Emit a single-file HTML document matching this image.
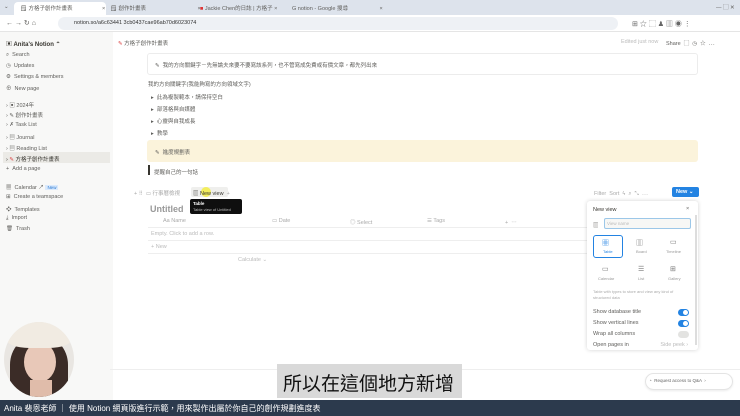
<!DOCTYPE html>
<html><head><meta charset="utf-8"><style>
*{margin:0;padding:0;box-sizing:border-box}
body{width:740px;height:416px;overflow:hidden;background:#fff;font-family:"Liberation Sans","Noto Sans CJK TC",sans-serif;position:relative;color:#37352f}
.a{position:absolute;white-space:nowrap}
.s{font-size:5.5px;color:#5f5e5b}
.m{font-size:6px;color:#37352f}
.g{color:#aaa}
</style></head><body>
<!-- tab bar -->
<div class="a" style="left:0;top:0;width:740px;height:15px;background:#dde3ec"></div>
<div class="a" style="left:14px;top:2px;width:92px;height:13px;background:#fff;border-radius:4px 4px 0 0"></div>
<div class="a s" style="left:20px;top:4px">🗒 方格子創作計畫表 <span style="margin-left:28px">×</span></div>
<div class="a s" style="left:110px;top:4px">🗒 創作計畫表 <span style="margin-left:50px">×</span></div>
<div class="a s" style="left:200px;top:4px"><span style="color:#d33">■</span> Jackie Chen的日誌 | 方格子 ×</div>
<div class="a s" style="left:292px;top:4px">G notion - Google 搜尋 <span style="margin-left:30px">×</span></div>
<div class="a s" style="left:4px;top:4px">⌄</div>
<div class="a s" style="left:716px;top:3px">— ▢ ✕</div>
<!-- address bar -->
<div class="a" style="left:0;top:15px;width:740px;height:17px;background:#fff;border-bottom:1px solid #e5e5e5"></div>
<div class="a s" style="left:6px;top:19px;font-size:7px">←  →  ↻  ⌂</div>
<div class="a" style="left:58px;top:17px;width:560px;height:13px;background:#eef1f5;border-radius:7px"></div>
<div class="a s" style="left:74px;top:20px;color:#333">notion.so/a6c63441 3cb0437cae96ab70d6023074</div>
<div class="a s" style="left:632px;top:19px;font-size:7px;color:#666">⊞ ☆ ⬚ ♟ ▥ ◉ ⋮</div>
<!-- sidebar -->
<div class="a" style="left:0;top:32px;width:113px;height:368px;background:#f8f8f7"></div>
<div class="a m" style="left:6px;top:39px;font-weight:bold">▣ Anita's Notion ⌃</div>
<div class="a s" style="left:6px;top:52px">⌕ &nbsp;Search</div>
<div class="a s" style="left:6px;top:63px">◷ &nbsp;Updates</div>
<div class="a s" style="left:6px;top:74px">⚙ &nbsp;Settings &amp; members</div>
<div class="a s" style="left:6px;top:84px">⊕ &nbsp;New page</div>
<div class="a s" style="left:6px;top:101px">› ▣ 2024年</div>
<div class="a s" style="left:6px;top:111px">› ✎ 創作計畫表</div>
<div class="a s" style="left:6px;top:122px">› ✗ Task List</div>
<div class="a s" style="left:6px;top:133px">› ▤ Journal</div>
<div class="a s" style="left:6px;top:144px">› ▤ Reading List</div>
<div class="a" style="left:3px;top:152px;width:107px;height:11px;background:#ebeae6"></div>
<div class="a s" style="left:6px;top:155px;color:#37352f">› <span style="color:#d44">✎</span> 方格子創作計畫表</div>
<div class="a s" style="left:6px;top:166px">+ &nbsp;Add a page</div>
<div class="a s" style="left:6px;top:183px">▦ &nbsp;Calendar ↗ <span style="background:#dbeafc;color:#2a7ad3;padding:0 2px;font-size:4.5px">New</span></div>
<div class="a s" style="left:6px;top:194px">⊞ &nbsp;Create a teamspace</div>
<div class="a s" style="left:6px;top:205px">❖ &nbsp;Templates</div>
<div class="a s" style="left:6px;top:215px">⤓ &nbsp;Import</div>
<div class="a s" style="left:6px;top:226px">🗑 &nbsp;Trash</div>
<!-- top bar -->
<div class="a s" style="left:118px;top:39px"><span style="color:#d44">✎</span> 方格子創作計畫表</div>
<div class="a s g" style="left:621px;top:39px;color:#bbb">Edited just now</div>
<div class="a s" style="left:666px;top:39px">Share &nbsp;▢ &nbsp;◷ &nbsp;☆ &nbsp;⋯</div>
<!-- callout -->
<div class="a" style="left:147px;top:53px;width:551px;height:22px;border:1px solid #ececec;border-radius:3px"></div>
<div class="a s" style="left:155px;top:61px">✎ &nbsp;我的方向關鍵字－先無論夫來要不要寫該系列，也不管寫成免費或有價文章，都先列出來</div>
<div class="a s" style="left:148px;top:80px">我的方向關鍵字(我能夠寫的方向領域文字)</div>
<div class="a s" style="left:151px;top:93px">▸ &nbsp;此為複製範本，請保持空白</div>
<div class="a s" style="left:151px;top:105px">▸ &nbsp;部落格與自媒體</div>
<div class="a s" style="left:151px;top:117px">▸ &nbsp;心靈與自我成長</div>
<div class="a s" style="left:151px;top:129px">▸ &nbsp;教學</div>
<div class="a" style="left:147px;top:140px;width:551px;height:22px;background:#fbf3db;border-radius:3px"></div>
<div class="a s" style="left:155px;top:148px">✎ &nbsp;進度規劃表</div>
<div class="a" style="left:148px;top:165px;width:1.5px;height:10px;background:#37352f"></div>
<div class="a s" style="left:154px;top:168px">提醒自己的一句話</div>
<!-- db -->
<div class="a s g" style="left:134px;top:189px">+ ⠿ &nbsp;▭ 行事曆檢視</div>
<div class="a" style="left:191px;top:187px;width:37px;height:10px;background:#efefed;border-radius:2px"></div>
<div class="a" style="left:201px;top:187px;width:10px;height:10px;background:#f4ee3a;border-radius:50%;opacity:.8"></div>
<div class="a s" style="left:193px;top:189px;color:#37352f">▥ New view &nbsp;<span class="g">+</span></div>
<div class="a" style="left:190px;top:199px;width:52px;height:15px;background:#0f0f0f;border-radius:2px"></div>
<div class="a" style="left:193px;top:201px;font-size:4.5px;color:#fff;font-weight:bold">Table</div>
<div class="a" style="left:193px;top:207px;font-size:4px;color:#bbb">Table view of Untitled</div>
<div class="a" style="left:150px;top:204px;font-size:9px;font-weight:bold;color:#999">Untitled</div>
<div class="a s g" style="left:163px;top:218px">Aa Name</div>
<div class="a s g" style="left:272px;top:218px">▭ Date</div>
<div class="a s g" style="left:350px;top:218px">◎ Select</div>
<div class="a s g" style="left:427px;top:218px">☰ Tags</div>
<div class="a s g" style="left:505px;top:218px">+ &nbsp;⋯</div>
<div class="a" style="left:148px;top:227px;width:440px;height:1px;background:#eee"></div>
<div class="a s g" style="left:151px;top:231px;color:#bbb">Empty. Click to add a row.</div>
<div class="a" style="left:148px;top:240px;width:440px;height:1px;background:#eee"></div>
<div class="a s g" style="left:151px;top:244px;color:#bbb">+ New</div>
<div class="a" style="left:148px;top:253px;width:440px;height:1px;background:#eee"></div>
<div class="a s g" style="left:238px;top:257px;color:#bbb">Calculate ⌄</div>
<div class="a s g" style="left:594px;top:189px">Filter &nbsp;Sort &nbsp;ϟ &nbsp;⌕ &nbsp;⤡ &nbsp;⋯</div>
<div class="a" style="left:672px;top:187px;width:27px;height:10px;background:#2383e2;border-radius:2px;color:#fff;font-size:5.5px;font-weight:bold;padding:2px 0 0 4px">New ⌄</div>
<!-- popup -->
<div class="a" style="left:587px;top:201px;width:111px;height:149px;background:#fff;box-shadow:0 0 4px rgba(0,0,0,.18);border-radius:3px"></div>
<div class="a s" style="left:593px;top:207px;color:#37352f">New view</div>
<div class="a s" style="left:686px;top:206px">×</div>
<div class="a s" style="left:593px;top:221px">▥</div>
<div class="a" style="left:604px;top:218px;width:87px;height:11px;border:1px solid #9cc7e8;border-radius:2px;background:#f7f7f5"></div>
<div class="a" style="left:607px;top:221px;font-size:4.5px;color:#bbb">View name</div>
<div class="a" style="left:593px;top:235px;width:30px;height:23px;border:1.5px solid #2383e2;border-radius:3px"></div>
<div class="a" style="left:602px;top:238px;font-size:7px;color:#2383e2">▦</div>
<div class="a" style="left:603px;top:249px;font-size:4px;color:#2383e2">Table</div>
<div class="a" style="left:636px;top:238px;font-size:7px;color:#777">▥</div>
<div class="a" style="left:636px;top:249px;font-size:4px;color:#999">Board</div>
<div class="a" style="left:670px;top:238px;font-size:7px;color:#777">▭</div>
<div class="a" style="left:666px;top:249px;font-size:4px;color:#999">Timeline</div>
<div class="a" style="left:602px;top:265px;font-size:7px;color:#777">▭</div>
<div class="a" style="left:598px;top:276px;font-size:4px;color:#999">Calendar</div>
<div class="a" style="left:638px;top:265px;font-size:7px;color:#777">☰</div>
<div class="a" style="left:638px;top:276px;font-size:4px;color:#999">List</div>
<div class="a" style="left:670px;top:265px;font-size:7px;color:#777">⊞</div>
<div class="a" style="left:668px;top:276px;font-size:4px;color:#999">Gallery</div>
<div class="a" style="left:593px;top:289px;font-size:4px;color:#aaa;white-space:normal;width:95px;line-height:6px">Table with types to store and view any kind of structured data</div>
<div class="a s" style="left:593px;top:309px">Show database title</div>
<div class="a s" style="left:593px;top:320px">Show vertical lines</div>
<div class="a s" style="left:593px;top:331px">Wrap all columns</div>
<div class="a s" style="left:593px;top:342px">Open pages in <span class="g" style="margin-left:30px;color:#bbb">Side peek ›</span></div>
<div class="a" style="left:678px;top:309px;width:11px;height:7px;background:#2383e2;border-radius:4px"></div>
<div class="a" style="left:683px;top:310px;width:5px;height:5px;background:#fff;border-radius:50%"></div>
<div class="a" style="left:678px;top:320px;width:11px;height:7px;background:#2383e2;border-radius:4px"></div>
<div class="a" style="left:683px;top:321px;width:5px;height:5px;background:#fff;border-radius:50%"></div>
<div class="a" style="left:678px;top:331px;width:11px;height:7px;background:#e3e3e1;border-radius:4px"></div>
<div class="a" style="left:695px;top:215px;width:2px;height:130px;background:#ddd"></div>
<!-- bottom -->
<div class="a" style="left:110px;top:369px;width:630px;height:1px;background:#eee"></div>
<div class="a" style="left:645px;top:373px;width:88px;height:17px;border:1px solid #e4e4e4;border-radius:9px;box-shadow:0 1px 2px rgba(0,0,0,.08)"></div>
<div class="a" style="left:649px;top:378px;font-size:4.5px;color:#666">◔ &nbsp;Request access to Q&amp;A &nbsp;›</div>
<!-- avatar -->
<div class="a" style="left:4px;top:322px;width:70px;height:75px;border-radius:50%;overflow:hidden;background:#e9e6e2">
  <div class="a" style="left:6px;top:14px;width:58px;height:64px;border-radius:45% 45% 20% 20%;background:#3b2c27"></div>
  <div class="a" style="left:20px;top:20px;width:32px;height:40px;border-radius:50%;background:#e8c8b8"></div>
  <div class="a" style="left:26px;top:58px;width:22px;height:20px;background:#e0bcaa"></div>
  <div class="a" style="left:2px;top:0;width:66px;height:26px;border-radius:50% 50% 35% 35%;background:#f1ebe2"></div>
</div>
<div class="a" style="left:277px;top:364px;width:185px;height:34px;background:#d9d9d9"></div>
<div class="a" style="left:283px;top:369px;font-size:19px;color:#111;font-family:'Noto Sans CJK TC',sans-serif">所以在這個地方新增</div>
<div class="a" style="left:0;top:400px;width:740px;height:16px;background:#2c3a4d"></div>
<div class="a" style="left:4px;top:403px;font-size:8px;color:#fff">Anita 裴恩老師 ｜ 使用 Notion 網頁版進行示範，用來製作出屬於你自己的創作規劃進度表</div>
</body></html>
